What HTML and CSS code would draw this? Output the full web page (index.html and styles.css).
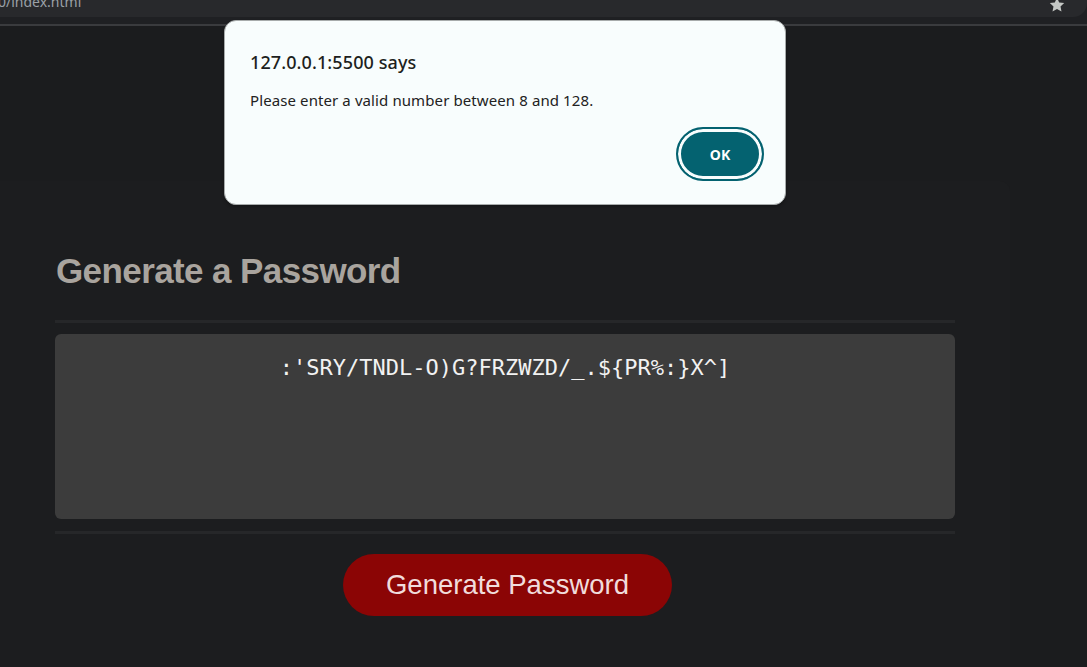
FILE: index.html
```html
<!DOCTYPE html>
<html lang="en">
<head>
<meta charset="utf-8">
<title>Password Generator</title>
<link rel="stylesheet" href="styles.css">
</head>
<body>
  <div class="chrome">
    <div class="omnibox">
      <span class="url">0/index.html</span>
      <svg class="star" width="16" height="16" viewBox="0 0 16 16"><path d="M8 0.8l2.2 4.6 5 .6-3.7 3.4 1 5-4.5-2.5-4.5 2.5 1-5L.8 6l5-.6z" fill="#c4c7c5"/></svg>
    </div>
  </div>

  <main class="page">
    <section class="card">
      <h1 class="title">Generate a Password</h1>
      <div class="rule"></div>
      <div class="output">:'SRY/TNDL-O)G?FRZWZD/_.${PR%:}X^]</div>
      <div class="rule"></div>
      <div class="actions">
        <button class="generate">Generate Password</button>
      </div>
    </section>
  </main>

  <div class="dialog" role="alertdialog">
    <div class="dialog-title">127.0.0.1:5500 says</div>
    <div class="dialog-msg">Please enter a valid number between 8 and 128.</div>
    <div class="dialog-actions">
      <button class="ok">OK</button>
    </div>
  </div>
</body>
</html>
```

FILE: styles.css
```css
* { box-sizing: border-box; }

html, body {
  margin: 0;
  padding: 0;
  height: 100%;
}

body {
  background: #1b1c1e;
  font-family: "Liberation Sans", Arial, sans-serif;
  overflow: hidden;
}

.chrome {
  height: 26px;
  background: #1f2023;
  border-bottom: 2px solid #3a3b3e;
  position: relative;
}

.omnibox {
  height: 17px;
  background: #28292c;
  border-radius: 0 0 14px 0;
  display: flex;
  align-items: flex-end;
  justify-content: space-between;
  padding: 0 22px 0 0;
  overflow: hidden;
}

.url {
  font-family: "Noto Sans", sans-serif;
  font-size: 14px;
  color: #9aa0a6;
  line-height: 14px;
  margin-bottom: 8px;
  margin-left: -2px;
}

.star {
  margin-bottom: 4px;
}

.page {
  padding-top: 155px;
}

.card {
  width: 1010px;
  height: 486px;
  background: #1c1d1f;
  border-radius: 0 10px 0 0;
  padding: 70px 55px 0 55px;
}

.title {
  margin: 0;
  font-size: 35px;
  font-weight: bold;
  color: #a9a49e;
  line-height: 40px;
  letter-spacing: -0.6px;
  padding-left: 1px;
}

.rule {
  height: 3px;
  background: #262729;
  width: 900px;
}

.card .title + .rule {
  margin-top: 29px;
}

.output {
  margin-top: 11px;
  height: 185px;
  width: 900px;
  background: #3c3c3c;
  border-radius: 6px;
  color: #f2f2f2;
  font-family: "DejaVu Sans Mono", monospace;
  font-size: 22px;
  text-align: center;
  padding-top: 21px;
  line-height: 26px;
}

.output + .rule {
  margin-top: 12px;
}

.actions {
  width: 900px;
  display: flex;
  justify-content: center;
  padding-top: 20px;
  padding-left: 5px;
}

.generate {
  width: 329px;
  height: 62px;
  border: none;
  border-radius: 31px;
  background: #8b0505;
  color: #f1dcdc;
  font-family: "Liberation Sans", Arial, sans-serif;
  font-size: 27.5px;
  padding: 0;
}

.dialog {
  position: absolute;
  left: 224px;
  top: 20px;
  width: 562px;
  height: 185px;
  background: #f8fdfd;
  border: 1px solid #a7abab;
  border-radius: 12px;
  padding: 29px 25px 0 25px;
  font-family: "Noto Sans", "Open Sans", sans-serif;
  color: #1d1f20;
  box-shadow: 0 2px 3px rgba(0,0,0,0.25);
}

.dialog-title {
  font-size: 18px;
  font-weight: 500;
  line-height: 24px;
  letter-spacing: 0.1px;
}

.dialog-msg {
  font-size: 15px;
  line-height: 20px;
  margin-top: 16px;
  color: #222;
  letter-spacing: 0.1px;
}

.dialog-actions {
  display: flex;
  justify-content: flex-end;
  margin-top: 17px;
  margin-right: -4px;
}

.ok {
  width: 88px;
  height: 54px;
  border-radius: 27px;
  background: #046270;
  border: 2.5px solid #046270;
  box-shadow: inset 0 0 0 3px #f8fdfd;
  color: #ffffff;
  font-family: "Noto Sans", sans-serif;
  font-weight: bold;
  font-size: 14px;
  padding: 0;
}
```
